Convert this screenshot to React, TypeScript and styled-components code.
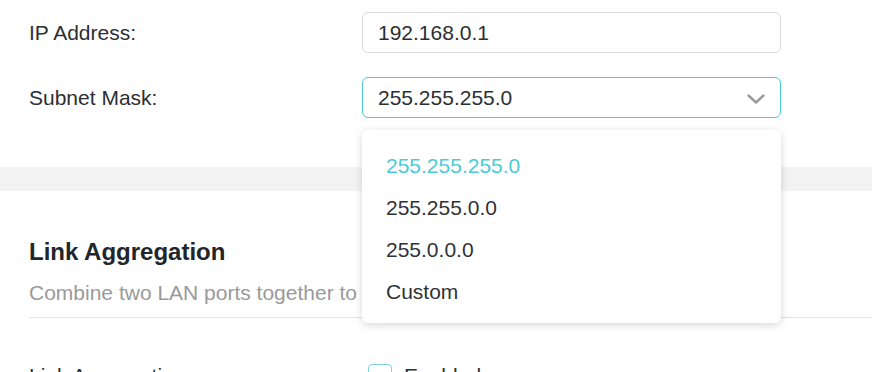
import React, {useState} from 'react'
import styled, {createGlobalStyle} from 'styled-components'

const teal = '#4acbd6'

const GlobalStyle = createGlobalStyle`
  body {
    margin: 0;
    background: #fff;
    font-family: 'Liberation Sans', Arial, sans-serif;
    color: #2b2f33;
  }
`

const Page = styled.div`
  width: 872px;
  height: 372px;
  overflow: hidden;
  background: #fff;
`

const Section = styled.div`
  padding: 12px 0 49px 29px;
  display: flex;
  flex-direction: column;
  gap: 24px;
`

const Band = styled.div`
  height: 24px;
  background: #f3f3f3;
`

const Row = styled.div`
  display: grid;
  grid-template-columns: 333px 419px;
  align-items: center;
  height: 41px;
`

const Label = styled.div`
  font-size: 21px;
  line-height: 28px;
  color: #2b2f33;
`

const Field = styled.div<{$focused?: boolean}>`
  position: relative;
  box-sizing: border-box;
  height: 41px;
  display: flex;
  align-items: center;
  justify-content: space-between;
  padding: 0 15px 0 15px;
  border: 1px solid ${(p) => (p.$focused ? teal : '#dadada')};
  border-radius: 6px;
  font-size: 21px;
  color: #2b2f33;
  background: #fff;
  cursor: ${(p) => (p.$focused ? 'pointer' : 'text')};
`

const Chevron = styled.svg`
  width: 18px;
  height: 10px;
  margin-top: 2px;
`

const Menu = styled.ul`
  position: absolute;
  top: calc(100% + 13px);
  left: -1px;
  right: -1px;
  margin: 0;
  padding: 15px 0 10px;
  list-style: none;
  background: #fff;
  border-radius: 6px;
  box-shadow: 0 2px 8px rgba(0, 0, 0, 0.16);
  z-index: 10;
`

const Option = styled.li<{$active?: boolean}>`
  height: 42px;
  display: flex;
  align-items: center;
  padding-left: 24px;
  font-size: 21px;
  color: ${(p) => (p.$active ? teal : '#2f3338')};
`

const Group = styled.div`
  padding: 45px 0 0 29px;
`

const GroupHead = styled.div`
  padding-bottom: 10px;
  border-bottom: 1px solid #e3e3e3;
`

const Title = styled.h2`
  margin: 0 0 11px;
  font-size: 24px;
  line-height: 32px;
  font-weight: 700;
  color: #22262a;
`

const Hint = styled.p`
  margin: 0;
  font-size: 21px;
  line-height: 28px;
  color: #9a9a9a;
`

const CheckRow = styled(Row)`
  margin-top: 37px;
`

const CheckWrap = styled.label`
  display: flex;
  align-items: center;
  gap: 12px;
  margin-left: 6px;
  font-size: 21px;
`

const Box = styled.span`
  box-sizing: border-box;
  width: 24px;
  height: 24px;
  border: 1.5px solid #7fd3dd;
  border-radius: 4px;
`

const masks = ['255.255.255.0', '255.255.0.0', '255.0.0.0', 'Custom']

export default function App() {
  const [mask] = useState('255.255.255.0')

  return (
    <Page>
      <GlobalStyle />
      <Section>
        <Row>
          <Label>IP Address:</Label>
          <Field>192.168.0.1</Field>
        </Row>
        <Row>
          <Label>Subnet Mask:</Label>
          <Field $focused>
            {mask}
            <Chevron viewBox='0 0 18 10' fill='none'>
              <path d='M1.5 1.5 L9 8.5 L16.5 1.5' stroke='#9b9b9b' strokeWidth='2.4' strokeLinecap='round' strokeLinejoin='round' />
            </Chevron>
            <Menu>
              {masks.map((m) => (
                <Option key={m} $active={m === mask}>
                  {m}
                </Option>
              ))}
            </Menu>
          </Field>
        </Row>
      </Section>
      <Band />
      <Group>
        <GroupHead>
          <Title>Link Aggregation</Title>
          <Hint>Combine two LAN ports together to increase the bandwidth.</Hint>
        </GroupHead>
        <CheckRow>
          <Label>Link Aggregation:</Label>
          <CheckWrap>
            <Box />
            Enabled
          </CheckWrap>
        </CheckRow>
      </Group>
    </Page>
  )
}
